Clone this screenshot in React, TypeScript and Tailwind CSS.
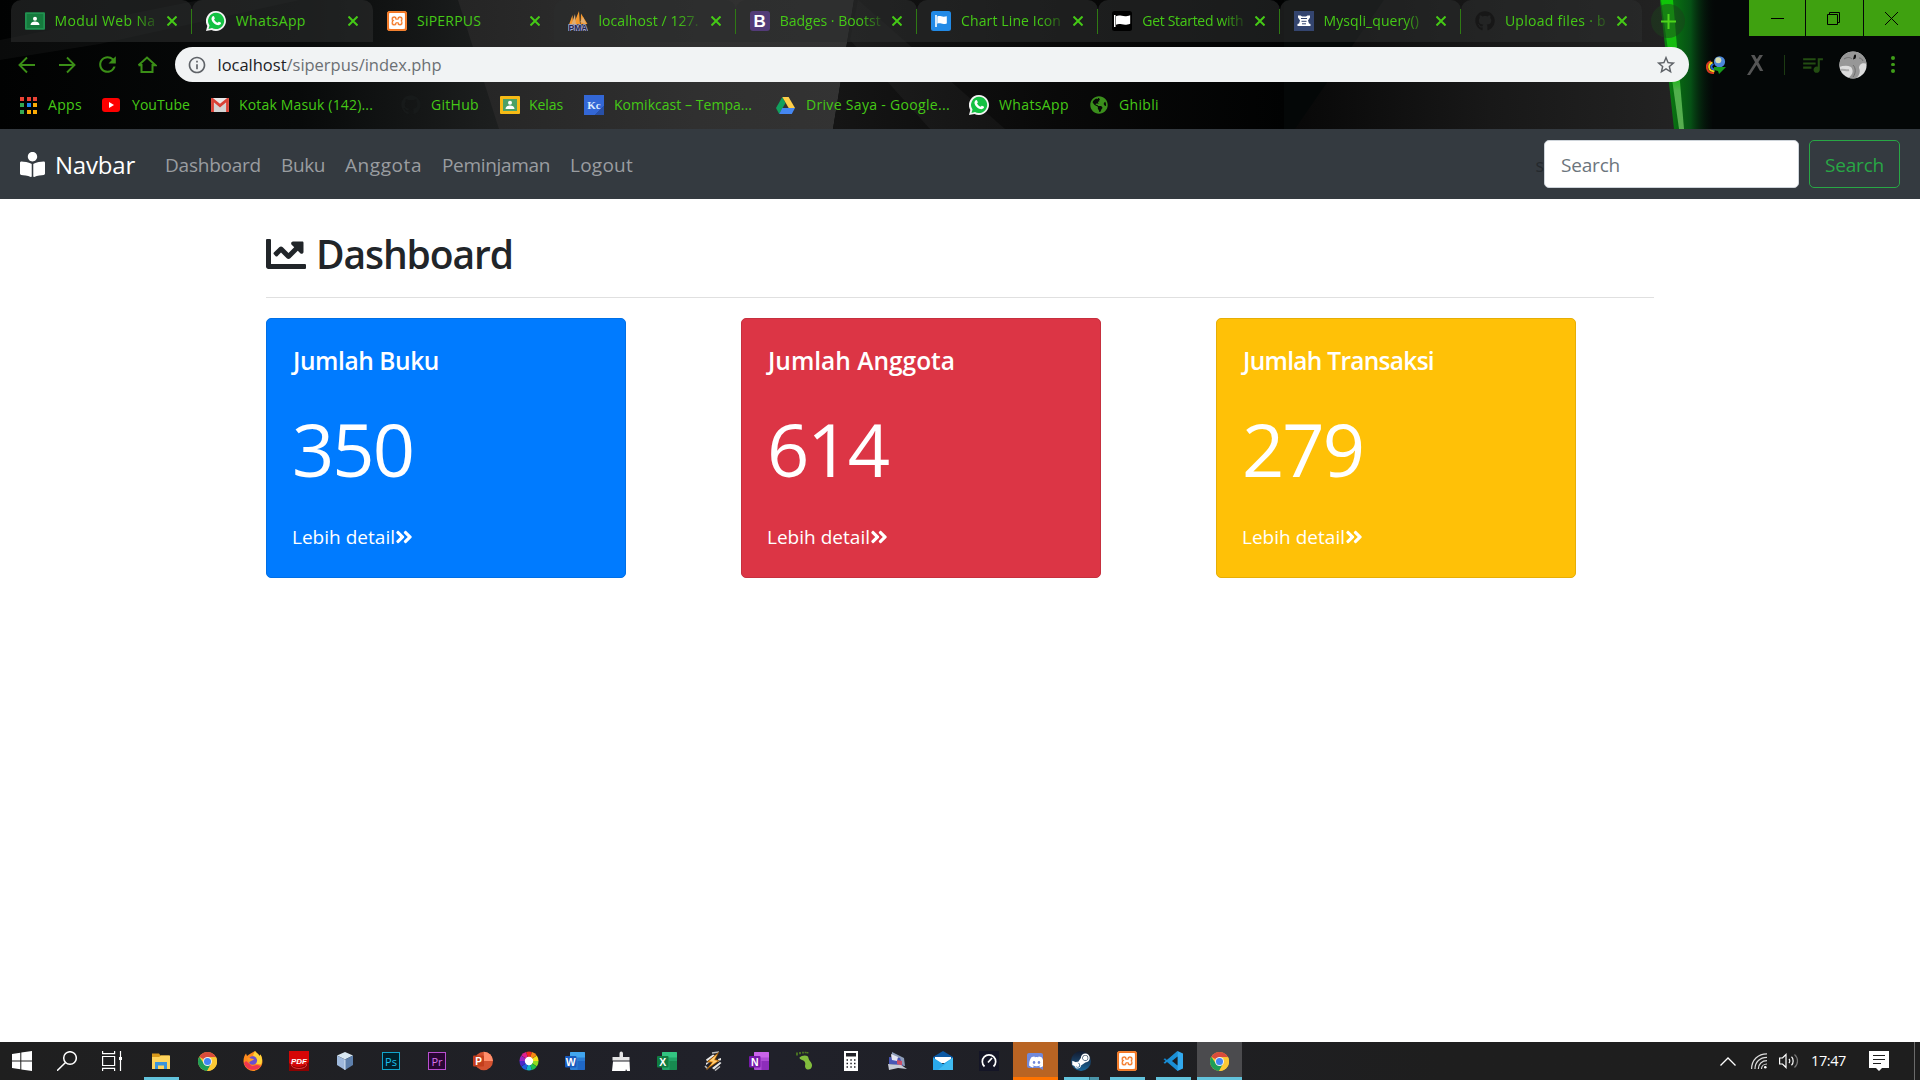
import { useLayoutEffect, useRef, useState, type ReactNode } from "react";
import {
  FaAngleDoubleRight,
  FaBookReader,
  FaChartLine,
  FaDiscord,
  FaGithub,
  FaGlobeAmericas,
  FaSteamSymbol,
} from "react-icons/fa";
import { MdInfoOutline, MdQueueMusic, MdRefresh, MdStarBorder } from "react-icons/md";
import { SiXampp } from "react-icons/si";

/* Text set to an exact advance width by spreading the difference over its letters. */
function Fit({ w, className = "", children }: { w: number; className?: string; children: string }) {
  const ref = useRef<HTMLSpanElement>(null);
  const [gap, setGap] = useState(0);
  useLayoutEffect(() => {
    const el = ref.current;
    if (!el) return;
    el.style.letterSpacing = "0px";
    const spacing = (w - el.getBoundingClientRect().width) / children.length;
    el.style.letterSpacing = `${spacing}px`;
    setGap(spacing);
  }, [w, children]);
  return (
    <span ref={ref} className={`inline-block shrink-0 whitespace-pre ${className}`} style={{ letterSpacing: gap }}>
      {children}
    </span>
  );
}

/* ---------- site icons ---------- */

const WhatsApp = () => (
  <svg viewBox="0 0 20 20" className="h-5 w-5">
    <path d="M10 0a10 10 0 1 1-4.6 18.9L0 20l1.3-5A10 10 0 0 1 10 0z" fill="#f4f4f4" />
    <path d="M10 1.8a8.1 8.1 0 1 1-4 15.1l-3.5 1 1-3.4A8.1 8.1 0 0 1 10 1.800z" fill="#14c143" />
    <path
      d="M6.800 5.300c.7-.5 1.100-.2 1.400.4l.6 1.500c.1.500-.5 1-.8 1.400.9 1.600 2 2.600 3.600 3.200.5-.4.900-1.200 1.400-1.100l1.700.8c.5.300.3 1.100 0 1.600-1 1.400-2.900 1.300-4.600.6C7.700 12.600 6.200 10.800 5.600 8.800c-.4-1.400.2-2.900 1.200-3.500z"
      fill="#fff"
    />
  </svg>
);

const Classroom = ({ yellow = false }: { yellow?: boolean }) => (
  <svg viewBox="0 0 20 20" className="h-5 w-5">
    <rect x="0" y={yellow ? 1 : 1.300} width="20" height={yellow ? 18 : 17.500} rx="1" fill={yellow ? "#f5ba15" : "#219150"} />
    <rect x={yellow ? 3 : 1.800} y={yellow ? 4 : 3} width={yellow ? 14 : 16.400} height={yellow ? 12 : 14} fill={yellow ? "#4ca166" : "#157a3d"} />
    <circle cx="10" cy="7.800" r="2" fill="#fff" />
    <path d="M5.500 14c0-4.600 9-4.600 9 0z" fill="#fff" />
  </svg>
);

const Xampp = () => (
  <div className="flex h-5 w-5 items-center justify-center rounded-xs border border-[#f08030] bg-[#f37623] text-white">
    <SiXampp size={16} stroke="currentColor" strokeWidth={1} />
  </div>
);

const PhpMyAdmin = () => (
  <svg viewBox="0 0 20 20" className="h-5 w-5">
    <path d="M1 13.500 4.500 4l.7 9.500zM5.500 13.500 11 0l1 13zM12.500 13 13 2.500 19.500 13z" fill="#f4982e" />
    <path d="M3.500 13.500 7 3l1 10.500zM12.300 11 15 6l3 7z" fill="#e0ad72" />
    <text x="10" y="19.500" textAnchor="middle" fontSize="8.500" fontWeight="bold" fontFamily="Liberation Sans" fill="#a9abd0" stroke="#a9abd0" strokeWidth="1.600">
      PMA
    </text>
    <text x="10" y="19.500" textAnchor="middle" fontSize="8.500" fontWeight="bold" fontFamily="Liberation Sans" fill="#23264f">
      PMA
    </text>
  </svg>
);

const Bootstrap = () => (
  <div className="flex h-5 w-5 items-center justify-center rounded-[3px] bg-[#533b78] font-['Liberation_Sans',sans-serif] text-[17px] leading-none font-bold text-white">
    B
  </div>
);

const FlagIcon = ({ blue = false }: { blue?: boolean }) => (
  <svg viewBox="0 0 20 20" className="h-5 w-5">
    <rect width="20" height="20" rx="2.500" fill={blue ? "#228ae6" : "#000"} />
    {blue ? (
      <path d="M4.200 4h1.600v12H4.200zM6.300 5.500c3-1.500 4.500 1.200 9.500-.3v7.300c-5 1.600-6.500-1.200-9.500.3z" fill="#fff" />
    ) : (
      <path d="M2 4h1.500v12H2zM4 5.200c4.500-2.200 7 1.600 14.200-1v8.600C11 15.400 8.500 11.600 4 13.800z" fill="#fff" />
    )}
  </svg>
);

const MysqlSite = () => (
  <svg viewBox="0 0 20 20" className="h-5 w-5">
    <rect width="20" height="20" fill="#34456f" />
    <path d="M4 4.500h2.500L8 5.500h4l1.500-1H16v2l-2 3 1 3 1.500.5v2H3.500v-2L5 12.500l1-3-2-3z" fill="#fff" />
    <path d="M7 7.500h6M7.500 10.300h5M8 12.800h4" stroke="#34456f" strokeWidth="1" />
  </svg>
);

const YouTube = () => (
  <svg viewBox="0 0 18 14" className="h-3.5 w-[18px]">
    <rect width="18" height="14" rx="3" fill="#fe0000" />
    <path d="m7 4 5 3-5 3z" fill="#fff" />
  </svg>
);

const Gmail = () => (
  <svg viewBox="0 0 18 14" className="h-3.5 w-[18px]">
    <rect width="18" height="14" rx="1.200" fill="#e9e9e9" />
    <path d="M3 14V5l6 4.500L15 5v9z" fill="#d4d4d4" />
    <path d="M1.500 14V1.500L9 7.700l7.500-6.200V14" fill="none" stroke="#da4236" strokeWidth="2.800" />
  </svg>
);

const Drive = () => (
  <svg viewBox="0 0 19 17" className="h-[17px] w-[19px]">
    <path d="M6.300 0 0 11l3.200 6 6.300-11z" fill="#11a05d" />
    <path d="M6.300 0h6.300L19 11h-6.300z" fill="#ffcf48" />
    <path d="M6.300 11H19l-3.200 6H3.200z" fill="#4587f3" />
  </svg>
);

const AppsGrid = () => (
  <div className="grid grid-cols-3 gap-[2.500px]">
    {["bg-[#ea4335]", "bg-[#ea4335]", "bg-[#ea4335]", "bg-[#34a853]", "bg-[#1a84f0]", "bg-[#fbab05]", "bg-[#34a853]", "bg-[#fbab05]", "bg-[#fbab05]"].map((c, i) => (
      <div key={i} className={`h-1 w-1 ${c}`} />
    ))}
  </div>
);

const Komik = () => (
  <div className="flex h-5 w-5 items-center justify-center bg-linear-to-br from-[#3367d6] from-75% to-[#2850a8] to-75% font-['Liberation_Serif',serif] text-[11px] font-bold text-blue-100">
    Kc
  </div>
);

const Chrome = () => (
  <svg viewBox="0 0 20 20" className="h-[19px] w-[19px]">
    <circle cx="10" cy="10" r="10" fill="#fcc934" />
    <path d="M10 10 1.340 5A10 10 0 0 1 18.660 5L19 5.600H10z" fill="#d94b3c" />
    <path d="M1.340 5A10 10 0 0 0 9.600 20L14 12.300 10 10 6.100 12.200z" fill="#1e9e58" />
    <path d="M10 5.600h9.100A10 10 0 0 1 9.600 20l4.200-7.600z" fill="#fcc934" />
    <circle cx="10" cy="10" r="4.700" fill="#f3f3f3" />
    <circle cx="10" cy="10" r="3.700" fill="#4285f4" />
  </svg>
);

/* ---------- browser window ---------- */

function ThemeArt() {
  return (
    <svg viewBox="0 0 1920 129" className="absolute inset-0 h-[129px] w-full" preserveAspectRatio="none">
      <defs>
        <linearGradient id="left" x1="0" x2="1">
          <stop offset="0" stopColor="#010202" />
          <stop offset=".6" stopColor="#080a0a" />
          <stop offset="1" stopColor="#1d1f1f" />
        </linearGradient>
        <linearGradient id="mid" x1="0" x2="1">
          <stop offset="0" stopColor="#252525" />
          <stop offset=".6" stopColor="#303030" />
          <stop offset="1" stopColor="#333333" />
        </linearGradient>
        <linearGradient id="dark" x1="0" x2="1">
          <stop offset="0" stopColor="#151515" />
          <stop offset=".5" stopColor="#090909" />
          <stop offset="1" stopColor="#010202" />
        </linearGradient>
        <linearGradient id="right" x1="0" x2="1">
          <stop offset="0" stopColor="#080808" />
          <stop offset=".5" stopColor="#181818" />
          <stop offset="1" stopColor="#232323" />
        </linearGradient>
        <linearGradient id="glow" x1="0" x2="1">
          <stop offset="0" stopColor="#0a8a0e" />
          <stop offset=".55" stopColor="#065015" />
          <stop offset="1" stopColor="#04090a" stopOpacity="0" />
        </linearGradient>
        <linearGradient id="beam" x1="0" x2="0" y1="0" y2="1">
          <stop offset="0" stopColor="#0fc508" />
          <stop offset=".6" stopColor="#19b514" />
          <stop offset=".7" stopColor="#4fb04b" />
          <stop offset="1" stopColor="#58ad50" />
        </linearGradient>
      </defs>
      <rect width="1920" height="129" fill="#040707" />
      <rect width="500" height="129" fill="url(#left)" />
      <path d="M100 44 300 0H200L0 40v20z" fill="#fff" opacity=".04" />
      <path d="M458 0h396l-21 129H499z" fill="url(#mid)" />
      <path d="M854 0h430v129H833z" fill="url(#dark)" />
      <path d="M858 0 1005 129H930L850 40z" fill="#fff" opacity=".035" />
      <path d="M1384 0h282l16 129h-387z" fill="url(#right)" />
      <path d="M1660 0h56l-4 129h-38z" fill="url(#glow)" />
      <path d="M1661 0h12l11 129h-5z" fill="url(#beam)" />
    </svg>
  );
}

type Tab = { icon: ReactNode; title: string; w: number; fade?: boolean; active?: boolean; line?: boolean };

const tabs: Tab[] = [
  { icon: <Classroom />, title: "Modul Web Na", w: 101, fade: true, line: true },
  { icon: <WhatsApp />, title: "WhatsApp", w: 70 },
  { icon: <Xampp />, title: "SiPERPUS", w: 64, active: true },
  { icon: <PhpMyAdmin />, title: "localhost / 127.", w: 100, fade: true, line: true },
  { icon: <Bootstrap />, title: "Badges · Bootst", w: 101, fade: true, line: true },
  { icon: <FlagIcon blue />, title: "Chart Line Icon", w: 100, fade: true, line: true },
  { icon: <FlagIcon />, title: "Get Started with", w: 101, fade: true, line: true },
  { icon: <MysqlSite />, title: "Mysqli_query() ", w: 99, fade: true, line: true },
  { icon: <FaGithub size={20} className="text-[#171717]" />, title: "Upload files · b", w: 101, fade: true },
];

function TabStrip() {
  return (
    <div className="relative flex h-[42px] pl-[10.500px]">
      {tabs.map((t) => (
        <div
          key={t.title}
          className={`relative flex w-[181.300px] shrink-0 items-center rounded-t-[10px] pl-[14px] last:w-[179px] ${t.active ? "" : "bg-[#2b2d2d]/60"}`}
        >
          <div className="flex w-5 shrink-0 justify-center">{t.icon}</div>
          <div
            className={`ml-[10px] w-[102px] shrink-0 overflow-hidden text-[14px] leading-[20px] ${t.fade ? "mask-r-from-78% mask-r-to-105%" : ""}`}
          >
            <Fit w={t.w}>{t.title}</Fit>
          </div>
          <svg viewBox="0 0 10 10" className="ml-[10.500px] h-[10px] w-[10px]">
            <path d="M.5.5l9 9M9.500.5l-9 9" stroke="#45c916" strokeWidth="2" />
          </svg>
          {t.line && <div className="absolute top-[9px] right-0 h-[25px] w-px bg-[#2f7a14]" />}
        </div>
      ))}
      <div className="mt-1 ml-[9px] flex h-[34px] w-[34px] items-center justify-center rounded-full bg-[#1b401b]/50">
        <svg viewBox="0 0 15 15" className="h-[15px] w-[15px]">
          <path d="M7.500 0v15M0 7.500h15" stroke="#4fd51c" strokeWidth="2" />
        </svg>
      </div>
      <div className="mb-[6px] ml-auto flex h-9 w-[171px] gap-px">
        <div className="flex w-14 items-center justify-center bg-[#3fa110]">
          <div className="h-px w-[13px] bg-black" />
        </div>
        <div className="flex w-[57px] items-center justify-center bg-[#3fa110]">
          <svg viewBox="0 0 13 13" className="mr-[2px] h-[13px] w-[13px]">
            <path d="M.5 2.500h10v10H.5zM2.500 2.500v-2h10v10h-2" fill="none" stroke="#000" />
          </svg>
        </div>
        <div className="flex w-14 items-center justify-center bg-[#3fa110] pr-[2px]">
          <svg viewBox="0 0 13 13" className="h-[13px] w-[13px]">
            <path d="M0 0l13 13M13 0L0 13" stroke="#000" />
          </svg>
        </div>
      </div>
    </div>
  );
}

function Toolbar() {
  return (
    <div className="relative flex h-[45px] items-center pl-[17px]">
      <div className="flex w-[158px] items-center text-[#3b8f17]">
        <svg viewBox="0 0 20 20" className="mr-5 h-5 w-5" fill="none" stroke="currentColor" strokeWidth="1.900">
          <path d="M18 10H3M10 2.500 2.500 10l7.500 7.500" />
        </svg>
        <svg viewBox="0 0 20 20" className="mr-[18px] h-5 w-5" fill="none" stroke="currentColor" strokeWidth="1.900">
          <path d="M2 10h15M10 2.500l7.500 7.500-7.500 7.500" />
        </svg>
        <MdRefresh size={25} className="mr-[17px]" />
        <svg viewBox="0 0 20 20" className="h-5 w-5" fill="none" stroke="currentColor" strokeWidth="2">
          <path d="M4.500 9v8h11V9M1.500 10.300 10 2.500l8.500 7.800h-3M1.500 10.300h3" />
        </svg>
      </div>
      <div className="flex h-[35px] w-[1514px] items-center rounded-full bg-[#f1f3f4] pr-[12px] pl-[12px] text-[16.500px] leading-[22px]">
        <MdInfoOutline size={20} className="mr-[10.500px] text-[#5f6368]" />
        <Fit w={69} className="text-[#202124]">localhost</Fit>
        <Fit w={155} className="text-[#6b6f73]">/siperpus/index.php</Fit>
        <MdStarBorder size={22} className="ml-auto text-[#5f6368]" />
      </div>
      <svg viewBox="0 0 20 18" className="ml-[17px] h-[18px] w-5">
        <path d="M5 5.500C-1.500 8 0 17.500 8 17" fill="none" stroke="#d93a20" strokeWidth="2" />
        <path d="M6.500 6.500C1.500 8.500 2 15.500 8.500 15.200" fill="none" stroke="#f2d51d" strokeWidth="2" />
        <path d="M7.500 8c-3.500 1.500-2.500 5.200 1.500 5.500" fill="none" stroke="#2269d8" strokeWidth="1.800" />
        <circle cx="13.500" cy="5.800" r="5.600" fill="#4b86d8" />
        <circle cx="12.300" cy="4.300" r="3" fill="#d8ddb0" />
        <path d="M8 11h12l-7 7-1-3-4-1z" fill="#179c1a" />
      </svg>
      <svg viewBox="0 0 18 20" className="ml-[21px] h-5 w-[18px]">
        <path d="M4 0h3.500l8.800 16H13zM12.500 0H16L3 20H0z" fill="#555555" />
      </svg>
      <div className="ml-[19px] h-5 w-px bg-[#1c3a12]" />
      <MdQueueMusic size={25} className="ml-[15px] text-[#234d12]" />
      <svg viewBox="0 0 28 28" className="ml-[14px] h-7 w-7">
        <clipPath id="face"><circle cx="14" cy="14" r="13.600" /></clipPath>
        <g clipPath="url(#face)">
          <rect width="28" height="28" fill="#dcdcdc" />
          <path d="M0 8C5-1 22-2 26 5l2 8c-4-2-8 0-8 4 2 4 0 9-4 11H8c6-4 7-8 4-12-4-2-8-1-12 0z" fill="#979797" />
          <path d="M5 8c3-2 6-2 8 0M20 7c2 0 3 1 4 3M14 14c3 3 3 8 0 12" fill="none" stroke="#6e6e6e" />
          <path d="M15 4.500c1-2 3-1 1.500 3l-2.500 1z" fill="#0b0b0b" />
          <path d="M1 19c4-1 6 1 9 0" fill="none" stroke="#aaa" strokeWidth="2" />
        </g>
      </svg>
      <div className="ml-[24px] flex flex-col gap-[3px]">
        <div className="h-[3.500px] w-[3.500px] rounded-full bg-[#3f9d18]" />
        <div className="h-[3.500px] w-[3.500px] rounded-full bg-[#3f9d18]" />
        <div className="h-[3.500px] w-[3.500px] rounded-full bg-[#3f9d18]" />
      </div>
    </div>
  );
}

const bookmarks: { icon: ReactNode; label: string; w: number; gap: string; next: string }[] = [
  { icon: <AppsGrid />, label: "Apps", w: 34, gap: "gap-[11px]", next: "mr-[20px]" },
  { icon: <YouTube />, label: "YouTube", w: 58, gap: "gap-[12px]", next: "mr-[21px]" },
  { icon: <Gmail />, label: "Kotak Masuk (142)...", w: 134, gap: "gap-[10px]", next: "mr-[28px]" },
  { icon: <FaGithub size={20} className="text-[#171a1a]" />, label: "GitHub", w: 48, gap: "gap-[10px]", next: "mr-[21px]" },
  { icon: <Classroom yellow />, label: "Kelas", w: 34, gap: "gap-[9px]", next: "mr-[21px]" },
  { icon: <Komik />, label: "Komikcast – Tempa...", w: 138, gap: "gap-[10px]", next: "mr-[24px]" },
  { icon: <Drive />, label: "Drive Saya - Google...", w: 144, gap: "gap-[11px]", next: "mr-[19px]" },
  { icon: <WhatsApp />, label: "WhatsApp", w: 70, gap: "gap-[10px]", next: "mr-[21px]" },
  { icon: <FaGlobeAmericas size={18} className="text-[#3b8f1c]" />, label: "Ghibli", w: 40, gap: "gap-[11px]", next: "" },
];

function Bookmarks() {
  return (
    <div className="relative flex h-[36px] items-center pl-[20px] text-[14px] leading-[20px]">
      {bookmarks.map((b, i) => (
        <div key={i} className={`flex shrink-0 items-center ${b.gap} ${b.next}`}>
          {b.icon}
          <Fit w={b.w}>{b.label}</Fit>
        </div>
      ))}
    </div>
  );
}

/* ---------- web page ---------- */

const links = [
  { label: "Dashboard", w: 96 },
  { label: "Buku", w: 44 },
  { label: "Anggota", w: 77 },
  { label: "Peminjaman", w: 108 },
  { label: "Logout", w: 63 },
];

function Navbar() {
  return (
    <nav className="flex h-[70px] shrink-0 items-center bg-[#343a40] px-5 text-[19px] leading-[30px] text-[#9a9da0]">
      <FaBookReader size={25} className="mt-px text-white" />
      <Fit w={80} className="mt-[2px] ml-[10px] text-[24px] text-white">Navbar</Fit>
      <div className="mt-px ml-[30px] flex gap-5">
        {links.map((l) => (
          <Fit key={l.label} w={l.w}>{l.label}</Fit>
        ))}
      </div>
      <span className="mt-px ml-auto text-[18px] text-[#24292d]">s</span>
      <div className="flex h-12 w-[255px] items-center rounded-[5px] border border-[#ced4da] bg-white pt-px pl-4 text-[#6c757d]">
        <Fit w={59}>Search</Fit>
      </div>
      <div className="ml-[10px] flex h-12 w-[91px] items-center justify-center rounded-[5px] border border-[#28a745] pt-px text-[#28a745]">
        <Fit w={59}>Search</Fit>
      </div>
    </nav>
  );
}

const cards = [
  { title: "Jumlah Buku", tw: 146, value: "350", color: "bg-[#007bff] border-[#006fe6]" },
  { title: "Jumlah Anggota", tw: 187, value: "614", color: "bg-[#dc3545] border-[#c6303e]" },
  { title: "Jumlah Transaksi", tw: 191, value: "279", color: "bg-[#ffc107] border-[#e6ae06]" },
];

function Page() {
  return (
    <main className="min-h-0 flex-1 bg-white pt-[31px] pl-[266px]">
      <h2 className="flex h-[48px] items-center text-[39px] leading-[48px] font-semibold text-[#212529]">
        <FaChartLine size={40} />
        <Fit w={197} className="ml-[10px]">Dashboard</Fit>
      </h2>
      <div className="mt-[19px] h-px w-[1388px] bg-[#e0e0e0]" />
      <div className="mt-[20px] flex">
        {cards.map((c) => (
          <div key={c.title} className="w-[475px]">
            <div className={`flex h-[260px] w-[360px] flex-col items-start rounded-[5px] border pl-[25px] text-white ${c.color}`}>
              <Fit w={c.tw} className="mt-[27px] ml-px text-[24.500px] leading-[30px] font-semibold">{c.title}</Fit>
              <Fit w={121} className="mt-[28px] text-[74px] leading-[90px]">{c.value}</Fit>
              <div className="mt-[28px] flex items-center text-[19px] leading-[30px]">
                <Fit w={103}>Lebih detail</Fit>
                <FaAngleDoubleRight size={20} className="-mt-px -ml-px" />
              </div>
            </div>
          </div>
        ))}
      </div>
    </main>
  );
}

/* ---------- taskbar ---------- */

const Adobe = ({ label, pink = false }: { label: string; pink?: boolean }) => (
  <div
    className={`flex h-[18px] w-[18px] items-center justify-center border font-['Open_Sans',sans-serif] text-[11px] leading-none ${pink ? "border-[#b94fd0] bg-[#2a0634] text-[#d573ec]" : "border-[#12a4cc] bg-[#00202c] text-[#1cc0ee]"}`}
  >
    {label}
  </div>
);

const Office = ({ letter, dark, mid, light }: { letter: string; dark: string; mid: string; light: string }) => (
  <svg viewBox="0 0 20 18" className="h-[18px] w-5">
    <rect x="5" width="15" height="18" rx="1" fill={mid} />
    <path d="M5 1a1 1 0 0 1 1-1h13a1 1 0 0 1 1 1v4.500H5z" fill={light} />
    <path d="M12.500 9H20v8a1 1 0 0 1-1 1h-6.500z" fill={dark} opacity=".6" />
    <rect y="4" width="11.500" height="11.500" rx="1" fill={dark} />
    <text x="5.700" y="13.500" textAnchor="middle" fontSize="10.500" fontWeight="bold" fontFamily="Liberation Sans" fill="#fff">
      {letter}
    </text>
  </svg>
);

const Svg = ({ children }: { children: ReactNode }) => (
  <svg viewBox="0 0 20 20" className="h-5 w-5">
    {children}
  </svg>
);

const wheel = ["#f22a1c", "#f98a12", "#f7e018", "#8ddd20", "#1fc04a", "#16b5c8", "#1f5fe0", "#4a28c8", "#9a25c0", "#e0208c"];

type TaskItem = { icon: ReactNode; bar?: boolean; stacked?: boolean; wide?: string };

const apps: TaskItem[] = [
  {
    icon: (
      <Svg>
        <path d="M1 2.500h7l1.500 2H18V8H1z" fill="#d99a1b" />
        <path d="M1 6h7l2-1.500h9V18H1z" fill="#ffd45c" />
        <path d="M4 18v-7h12v7h-3v-3.500H7V18z" fill="#3b94dc" />
      </Svg>
    ),
    bar: true,
  },
  { icon: <Chrome /> },
  {
    icon: (
      <Svg>
        <path d="M12 0c1 2 4 3 4.500 5l1-1.500C20 8 20 12 18 15.500A9.500 9.500 0 0 1 .5 10C.5 7 1.500 4 3 2.500L4 5l2-1.500z" fill="#ff8a1c" />
        <path d="M12 0c1 2 4 3 4.500 5l1-1.500c2 4 2 7 .5 10l-6-1c2-4 0-7-2-8z" fill="#ffd43a" />
        <path d="M1 12c2 8 13 9 17 3l-4-1-5 1-6-5z" fill="#f0364f" />
        <circle cx="9.800" cy="9.500" r="4.300" fill="#6a4fd0" />
        <path d="M4 7c3-1 4 1 7 1-1 2-4 1.500-5 4z" fill="#ff9a22" />
      </Svg>
    ),
  },
  {
    icon: (
      <Svg>
        <rect width="20" height="20" fill="#d50606" />
        <path d="M0 12c7 6 13 5 20-1v9H0z" fill="#8d0202" />
        <ellipse cx="10" cy="14" rx="7.500" ry="3.500" fill="none" stroke="#e23b3b" />
        <text x="10" y="13" textAnchor="middle" fontSize="8" fontStyle="italic" fontWeight="bold" fontFamily="Liberation Sans" fill="#fff">PDF</text>
      </Svg>
    ),
  },
  {
    icon: (
      <Svg>
        <path d="M10 1l8 3.500-8 4-8-4z" fill="#d9e8f2" />
        <path d="M2 4.500l8 4V19l-8-5z" fill="#9fb9dc" />
        <path d="M18 4.500l-8 4V19l8-5z" fill="#5e80ac" />
        <path d="M10 8.500V19" stroke="#e8f2fa" strokeWidth=".8" />
      </Svg>
    ),
  },
  { icon: <Adobe label="Ps" /> },
  { icon: <Adobe label="Pr" pink /> },
  {
    icon: (
      <Svg>
        <circle cx="10.800" cy="10" r="9.200" fill="#d35230" />
        <path d="M10.800.8A9.200 9.200 0 0 1 20 10h-9.200z" fill="#ff8f6b" />
        <rect y="4.500" width="11" height="11" rx="1" fill="#c43e1c" />
        <text x="5.500" y="13.700" textAnchor="middle" fontSize="10" fontWeight="bold" fontFamily="Liberation Sans" fill="#fff">P</text>
      </Svg>
    ),
  },
  {
    icon: (
      <Svg>
        {wheel.map((c, i) => (
          <path key={c} d="M10 10 7.100.9A9.500 9.500 0 0 1 12.900.9z" fill={c} transform={`rotate(${i * 36} 10 10)`} />
        ))}
        <circle cx="10" cy="10" r="4.200" fill="#fff" />
      </Svg>
    ),
  },
  { icon: <Office letter="W" dark="#185abd" mid="#2b7cd3" light="#41a5ee" /> },
  {
    icon: (
      <Svg>
        <path d="M8.500 6V2.500C8.500-.3 12-.3 12 2.500V6h6.500v3.500h-17V6z" fill="#e4e4e4" />
        <path d="M2 10.500h16.500L19 20h-3l-1-2-.5 2H1z" fill="#fff" />
      </Svg>
    ),
  },
  { icon: <Office letter="X" dark="#107c41" mid="#21a366" light="#33c481" /> },
  {
    icon: (
      <Svg>
        <path d="M3 8.500l7-5 2 1L4 10.500zM9 17l8-6 1.500 1L11 18.500zM3 12l3-2 1 1-4 3zM15 8l3-1v2l-3 2z" fill="#e8e8e8" />
        <path d="M9 2l7-1M2 15l3 3M12 19.500l5-4" stroke="#bdbdbd" strokeWidth="1.500" />
        <path d="M16 1 4 11l5 .5L3 19 16.500 9.500 12 8.500z" fill="#f59a1e" stroke="#6b3a05" strokeWidth=".6" />
        <path d="M14 3.500 6.500 10l4 .5L7 15l7.500-5-4-.8z" fill="#ffcf7a" />
      </Svg>
    ),
  },
  { icon: <Office letter="N" dark="#7719aa" mid="#ae4bd5" light="#ca64ea" /> },
  {
    icon: (
      <Svg>
        <path d="M4.500 6.500C7 4 13 3.500 13.500 7c.3 3 4 4.500 3.500 8-.5 4-5 4.500-6.500 2-1.300-2.500.8-4-1-6.500C8 8.500 4.500 9 4.500 6.500z" fill="#82bd3d" />
        <path d="M2 1.500v3M5 1v2.200M8 .8v1.700M10.500.8v1.500M12.500 1v1.500" stroke="#4d7a22" strokeWidth="1.800" />
      </Svg>
    ),
  },
  {
    icon: (
      <svg viewBox="0 0 14 20" className="h-5 w-3.5">
        <path d="M0 0h14v20H0z" fill="#fff" />
        <path d="M2 2h10v3.500H2z" fill="#222228" />
        <path d="M2.500 9h1.500M6.300 9h1.500M10 9h1.500M2.500 12.500h1.500M6.300 12.500h1.500M10 12.500h1.500M2.500 16h1.500M6.300 16h1.500M10 16h1.500" stroke="#222228" strokeWidth="1.500" />
      </svg>
    ),
  },
  {
    icon: (
      <Svg>
        <path d="M5 1l12 6 1 8-14-3z" fill="#8d9cb8" />
        <path d="M2 6l11 1 3 8-14-2z" fill="#4856b5" />
        <path d="M4 3l7 3-1 4-5-1z" fill="#e6e6f2" />
        <path d="M10 9l5 1v5l-5-2z" fill="#c9506a" />
        <path d="M1 13l13 1 6 4-9-1-9 2z" fill="#c8ccd6" />
      </Svg>
    ),
  },
  {
    icon: (
      <Svg>
        <path d="M0 6l10-6 10 6v3H0z" fill="#0c59a4" />
        <path d="M2 6h16v6H2z" fill="#fff" />
        <path d="M0 6.500l10 6.500 10-6.500V19H0z" fill="#2aa8ea" />
        <path d="M20 6.500V19H5z" fill="#50c8f5" opacity=".6" />
      </Svg>
    ),
  },
  {
    icon: (
      <Svg>
        <rect width="20" height="20" fill="#141526" />
        <path d="M5.500 15.500a6.700 6.700 0 1 1 9 0" fill="none" stroke="#fff" strokeWidth="1.700" />
        <path d="M9 11.500l4-4.500" stroke="#fff" strokeWidth="1.700" />
      </Svg>
    ),
  },
  {
    icon: (
      <svg viewBox="0 0 16 17" className="h-[17px] w-4">
        <path d="M2 0h12a2 2 0 0 1 2 2v15l-3.500-2H2a2 2 0 0 1-2-2V2a2 2 0 0 1 2-2z" fill="#7289da" />
        <FaDiscord x={1.500} y={1} width={13} height={13} color="#fff" />
      </svg>
    ),
    wide: "bg-[#b96423] border-[#ff7300]",
  },
  {
    icon: (
      <div className="flex h-5 w-5 items-center justify-center rounded-full bg-linear-to-b from-[#111a2e] to-[#17679b] text-white">
        <FaSteamSymbol size={20} />
      </div>
    ),
    bar: true,
    stacked: true,
  },
  { icon: <Xampp />, bar: true },
  {
    icon: (
      <Svg>
        <path d="M14.500 0 4.500 9.500 2 7.300.5 8.200 15 20z" fill="#1482c8" />
        <path d="M14.500 20 4.500 10.500 2 12.700.5 11.800 14.500 0l.5 5.500L9.500 10l5.500 4.500z" fill="#1a8fd6" />
        <path d="M14.500 0 20 2.500v15L14.500 20z" fill="#32a9ee" />
        <path d="M14.500 5.500v9L9 10z" fill="#1c1d22" />
      </Svg>
    ),
    bar: true,
  },
  { icon: <Chrome />, wide: "bg-[#4b4b4e] border-[#62c3dc]" },
];

function Taskbar() {
  return (
    <footer className="flex h-[38px] shrink-0 items-stretch bg-linear-to-r from-[#1f1f1f] via-[#20212a] via-40% to-[#1e1e1e] to-75%">
      <div className="flex w-[139px] items-center">
        <svg viewBox="0 0 20 20" className="ml-3 h-5 w-5 fill-white">
          <path d="M0 3l8.300-1.200v7.700H0zM9.300 1.600 20 0v9.500H9.300zM0 10.500h8.300v7.800L0 17.100zM9.300 10.500H20V20L9.300 18.400z" />
        </svg>
        <svg viewBox="0 0 20 20" className="ml-[25px] h-5 w-5" fill="none" stroke="#fff" strokeWidth="1.500">
          <circle cx="13" cy="7" r="6.300" />
          <path d="M8.500 11.500 0 19.800" />
        </svg>
        <svg viewBox="0 0 20 20" className="ml-[25px] h-5 w-5" fill="none" stroke="#fff" strokeWidth="1.200">
          <path d="M.6 5.500h12v9H.6zM.6 0v2.700h12V0M.6 20v-2.700h12V20M18.500 0v20" />
          <path d="M18.500 6v3" strokeWidth="3" />
        </svg>
      </div>
      {apps.map((a, i) => (
        <div key={i} className="w-[46px]">
          <div className={`flex h-full w-[45px] flex-col items-center ${a.wide ? `${a.wide} border-b-[3px]` : ""}`}>
            <div className="flex h-[38px] w-[44px] shrink-0 items-center justify-center pr-px">{a.icon}</div>
            {a.bar && (
              <div className="-mt-[3px] flex h-[3px] w-[35px] shrink-0 bg-[#62c3dc]">
                {a.stacked && <div className="ml-auto w-[10px] border-l border-[#2d6b7a] bg-[#4a94a8]" />}
              </div>
            )}
          </div>
        </div>
      ))}
      <div className="ml-auto flex items-center text-white">
        <svg viewBox="0 0 16 9" className="h-[9px] w-4" fill="none" stroke="#fff" strokeWidth="1.300">
          <path d="M.5 8.500 8 1l7.500 7.500" />
        </svg>
        <svg viewBox="0 0 16 16" className="ml-[15px] h-4 w-4" fill="none" stroke="#ddd" strokeWidth="1.200">
          <path d="M.6 16C.6 7 7 .8 16 .8" />
          <path d="M4 16C4 9 9 4.300 16 4.300" />
          <path d="M7.300 16c0-5 3.700-8.300 8.700-8.300" />
          <path d="M10.500 16c0-3 2.500-5 5.500-5" />
          <circle cx="14.300" cy="14.300" r="1.300" fill="#fff" stroke="none" />
        </svg>
        <svg viewBox="0 0 20 18" className="ml-[12px] h-[18px] w-5" fill="none" stroke="#fff" strokeWidth="1.200">
          <path d="M.6 6h2.900L7 2.500v13L3.500 12H.6z" />
          <path d="M10 7c1 1 1 3 0 4M12.500 4.800c2.200 2 2.200 6.400 0 8.400" />
          <path d="M15.500 2.500c4 3.500 4 9.500 0 13" stroke="#777" />
        </svg>
        <Fit w={35} className="ml-[12px] text-[14.500px] leading-[20px]">17:47</Fit>
        <svg viewBox="0 0 20 20" className="ml-[23px] h-5 w-5">
          <path d="M0 0h20v17h-7l-3 3-3-3H0z" fill="#fff" />
          <path d="M4 4.500h12M4 8.500h12M4 12.500h8" stroke="#1e1e1e" strokeWidth="1.200" />
        </svg>
      </div>
      <div className="ml-[25px] w-[6px] border-l border-[#6a6a6a]" />
    </footer>
  );
}

export default function App() {
  return (
    <div className="flex h-[1080px] w-[1920px] flex-col overflow-hidden bg-white font-['Open_Sans','Noto_Sans',sans-serif]">
      <header className="relative h-[129px] shrink-0 border-b-2 border-[#1e1e1e] text-[#45c916]">
        <ThemeArt />
        <TabStrip />
        <Toolbar />
        <Bookmarks />
      </header>
      <Navbar />
      <Page />
      <Taskbar />
    </div>
  );
}
